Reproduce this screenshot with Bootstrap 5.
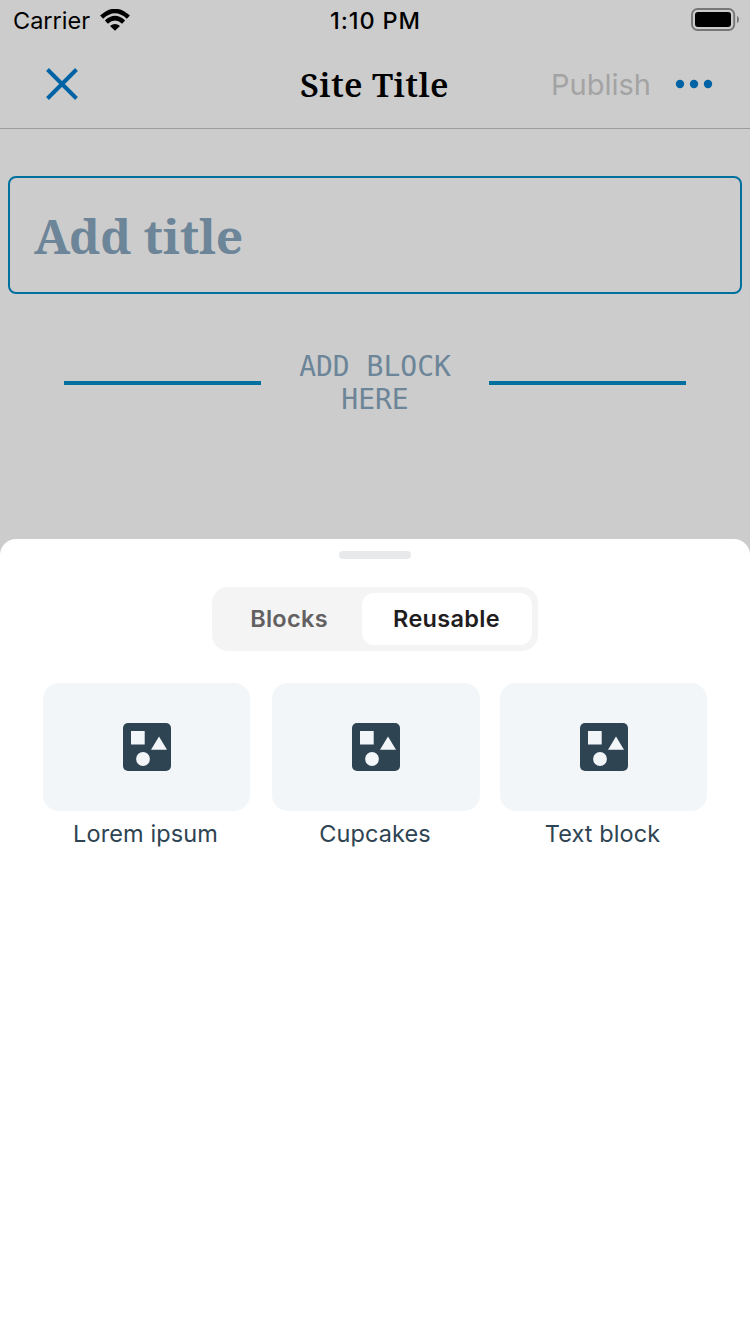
<!DOCTYPE html>
<html lang="en">
<head>
<meta charset="utf-8">
<meta name="viewport" content="width=device-width, initial-scale=1">
<title>Site Title</title>
<link href="https://cdn.jsdelivr.net/npm/bootstrap@5.3.0/dist/css/bootstrap.min.css" rel="stylesheet">
<style>
  body { background: #ccc; font-family: Inter, "Liberation Sans", sans-serif; color: #000; }
  .screen { height: 1334px; }
  .status-bar { height: 40px; padding: 0 11px 0 13px; font-size: 23.5px; line-height: 40px; }
  .status-bar span { padding-top: 1px; }
  .side { flex: 1 1 0; }
  .wifi { margin-left: 10px; }
  .clock { font-weight: 500; letter-spacing: .9px; margin-left: -1px; }
  .editor-bar { height: 89px; border-bottom: 1px solid #9c9c9c; padding: 0 36px 0 46px; }
  .site-name { font: 600 33.2px/1 "Noto Serif", "Liberation Serif", serif; letter-spacing: .4px; padding-top: 2px; margin-left: -11px; }
  .publish { color: #a3a3a3; font-size: 29px; padding-top: 2px; }
  .dots { margin-left: 24px; margin-right: 1px; }
  .accent { color: #0063a5; }
  .title-box { height: 118px; margin: 47px 8px 0; border: 2px solid #00709e; border-radius: 8px; padding: 2px 24px 0; }
  .title-box span { font: 700 48px/1 "Noto Serif", "DejaVu Serif Condensed", serif; letter-spacing: -.1px; color: #6c8598; }
  .inserter { margin: 56px 64px 0; height: 66px; }
  .rule { height: 4px; background: #00709e; flex: 1 1 0; }
  .inserter p { width: 228px; font: 28px/33px "DejaVu Sans Mono", monospace; color: #6c8598; padding: 0 36px; }
  .sheet { margin-top: 123px; border-radius: 16px 16px 0 0; }
  .grip { width: 72px; height: 8px; margin-top: 12px; background: #e8e9ea; border-radius: 4px; }
  .segments { width: 326px; height: 64px; margin-top: 28px; padding: 6px; background: #f4f4f4; border-radius: 16px; font-weight: 600; font-size: 23.5px; letter-spacing: .3px; color: #636061; }
  .segments .seg { height: 52px; border-radius: 12px; }
  .seg-blocks { width: 144px; padding-left: 0; padding-right: 2px; }
  .seg-active { width: 170px; color: #1f1d1e; background: #fff; padding-right: 1px; }
  .tiles { margin: 32px 43px 0; }
  .tile { width: 207px; }
  .tile-mid { width: 208px; margin: 0 20px 0 22px; }
  .tile-face { height: 128px; background: #f2f6f9; border-radius: 16px; }
  .tile-name { color: #2e4453; font-size: 23.5px; line-height: 46px; letter-spacing: .1px; padding-right: 2px; }
  .tile:last-child .tile-face { padding-left: 1px; }
</style>
</head>
<body>
<div class="screen d-flex flex-column overflow-hidden">
  <div class="status-bar d-flex align-items-center">
    <div class="side d-flex align-items-center">
      <span>Carrier</span>
      <svg class="wifi" width="30" height="22" viewBox="0 0 30 22">
        <path d="M1.6 8.2Q15-4.2 28.4 8.2" fill="none" stroke="#000" stroke-width="4.4"/>
        <path d="M6.4 13.1Q15 5.2 23.6 13.1" fill="none" stroke="#000" stroke-width="4.4"/>
        <path d="M10 17.1Q15 13.1 20 17.1L15 21.7Z"/>
      </svg>
    </div>
    <span class="clock">1:10 PM</span>
    <div class="side d-flex justify-content-end">
      <svg width="48" height="24" viewBox="0 0 48 24">
        <rect x="1" y="1" width="42.2" height="21" rx="5.5" fill="none" stroke="#777" stroke-width="1.9"/>
        <rect x="4" y="4" width="36" height="15" rx="3"/>
        <path d="M46 7.8Q48 9 48 11.5T46 15.2Z" fill="#777"/>
      </svg>
    </div>
  </div>
  <nav class="editor-bar d-flex align-items-center">
    <div class="side">
      <svg class="accent d-block" width="32" height="32" viewBox="0 0 32 32"><path d="M1.5 1.5l29 29M30.5 1.5l-29 29" stroke="currentColor" stroke-width="3.9"/></svg>
    </div>
    <span class="site-name">Site Title</span>
    <div class="side d-flex align-items-center justify-content-end">
      <span class="publish">Publish</span>
      <svg class="accent dots" width="38" height="10" viewBox="0 0 38 10"><g fill="currentColor"><circle cx="5" cy="5" r="4.2"/><circle cx="19" cy="5" r="4.2"/><circle cx="33" cy="5" r="4.2"/></g></svg>
    </div>
  </nav>
  <div class="title-box d-flex align-items-center"><span>Add title</span></div>
  <div class="inserter d-flex align-items-center">
    <div class="rule"></div>
    <p class="m-0 text-center">ADD BLOCK HERE</p>
    <div class="rule"></div>
  </div>
  <section class="sheet bg-white flex-grow-1 d-flex flex-column">
    <div class="grip align-self-center"></div>
    <div class="segments d-flex align-self-center">
      <div class="seg seg-blocks d-flex align-items-center justify-content-center"><span>Blocks</span></div>
      <div class="seg seg-active d-flex align-items-center justify-content-center"><span>Reusable</span></div>
    </div>
    <svg class="d-none"><symbol id="reusable" viewBox="0 0 48 48">
      <rect width="48" height="48" rx="5" fill="#2e4453"/>
      <g fill="#f2f6f9"><path d="M8 8h13.7v13.5H8zM36 13.5l8 13.3H28z"/><circle cx="20" cy="36" r="6.9"/></g>
    </symbol></svg>
    <div class="tiles d-flex text-center">
      <div class="tile"><div class="tile-face d-flex align-items-center justify-content-center"><svg width="48" height="48"><use href="#reusable"/></svg></div><div class="tile-name"><span>Lorem ipsum</span></div></div>
      <div class="tile tile-mid"><div class="tile-face d-flex align-items-center justify-content-center"><svg width="48" height="48"><use href="#reusable"/></svg></div><div class="tile-name"><span>Cupcakes</span></div></div>
      <div class="tile"><div class="tile-face d-flex align-items-center justify-content-center"><svg width="48" height="48"><use href="#reusable"/></svg></div><div class="tile-name"><span>Text block</span></div></div>
    </div>
  </section>
</div>
<script src="https://cdn.jsdelivr.net/npm/bootstrap@5.3.0/dist/js/bootstrap.bundle.min.js"></script>
</body>
</html>
